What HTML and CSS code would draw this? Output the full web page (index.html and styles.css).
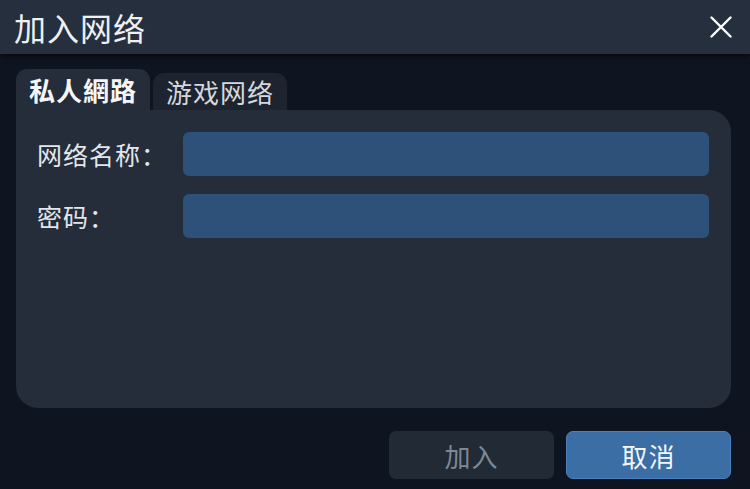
FILE: index.html
```html
<!DOCTYPE html>
<html lang="zh-CN">
<head>
    <meta charset="UTF-8">
    <meta name="viewport" content="width=device-width, initial-scale=1.0">
    <title>加入网络</title>
    <link rel="stylesheet" href="styles.css">
</head>
<body>
    <div class="dialog">
        <div class="title-bar">
            <span class="title">加入网络</span>
            <button class="close-btn" aria-label="关闭">
                <svg width="22" height="22" viewBox="0 0 22 22">
                    <path d="M1.5 1.5 L20.5 20.5 M20.5 1.5 L1.5 20.5" stroke="#ffffff" stroke-width="2.4" stroke-linecap="round" fill="none"/>
                </svg>
            </button>
        </div>

        <div class="content">
            <div class="tabs">
                <div class="tab active">私人網路</div>
                <div class="tab">游戏网络</div>
            </div>
            <div class="panel">
                <div class="form-row">
                    <label class="label">网络名称：</label>
                    <input class="field" type="text">
                </div>
                <div class="form-row">
                    <label class="label">密码：</label>
                    <input class="field" type="password">
                </div>
            </div>
            <div class="actions">
                <button class="btn btn-disabled">加入</button>
                <button class="btn btn-primary">取消</button>
            </div>
        </div>
    </div>
</body>
</html>
```

FILE: styles.css
```css
html, body {
    margin: 0;
    height: 100%;
}
body {
    font-family: "Noto Sans CJK SC", "Noto Sans", sans-serif;
    background-color: #0f1520;
    color: #e6e9ee;
    overflow: hidden;
}
.dialog {
    width: 750px;
    height: 489px;
}
.title-bar {
    height: 54px;
    background-color: #262f3e;
    display: flex;
    align-items: center;
    justify-content: space-between;
    padding: 0 18px 0 14px;
    box-shadow: 0 2px 6px rgba(0, 0, 0, 0.7);
    position: relative;
}
.title {
    font-size: 32px;
    line-height: 1;
    color: #eef0f3;
    letter-spacing: 1px;
}
.close-btn {
    background: none;
    border: none;
    padding: 0;
    width: 22px;
    height: 22px;
    cursor: pointer;
}
.content {
    padding: 15px 19px 0 16px;
}
.tabs {
    display: flex;
    align-items: flex-end;
    gap: 3px;
    height: 41px;
}
.tab {
    width: 134px;
    height: 37px;
    background-color: #1d242f;
    border-radius: 11px 11px 0 0;
    font-size: 26px;
    line-height: 37px;
    letter-spacing: 1px;
    text-align: center;
    color: #d3d8df;
}
.tab.active {
    height: 41px;
    line-height: 41px;
    background-color: #252d3b;
    font-weight: bold;
    color: #f4f6f8;
}
.panel {
    height: 298px;
    box-sizing: border-box;
    background-color: #252d3b;
    border-radius: 0 22px 22px 22px;
    padding: 22px 22px 0 21px;
    display: flex;
    flex-direction: column;
    gap: 18px;
}
.form-row {
    display: flex;
    align-items: center;
}
.label {
    width: 146px;
    font-size: 25px;
    letter-spacing: 1px;
    color: #e3e6ea;
}
.field {
    flex: 1;
    height: 44px;
    box-sizing: border-box;
    background-color: #2d5179;
    border: none;
    border-radius: 6px;
    color: #ffffff;
    font-size: 20px;
    padding: 0 10px;
    outline: none;
}
.actions {
    display: flex;
    justify-content: flex-end;
    gap: 12px;
    margin-top: 23px;
}
.btn {
    width: 165px;
    height: 48px;
    border-radius: 7px;
    font-family: inherit;
    font-size: 26px;
    letter-spacing: 1px;
    cursor: pointer;
}
.btn-disabled {
    background-color: #222a35;
    border: none;
    color: #7c8896;
}
.btn-primary {
    background-color: #3a6ea5;
    border: 1px solid #4a80bb;
    color: #f3f6fa;
}
```
